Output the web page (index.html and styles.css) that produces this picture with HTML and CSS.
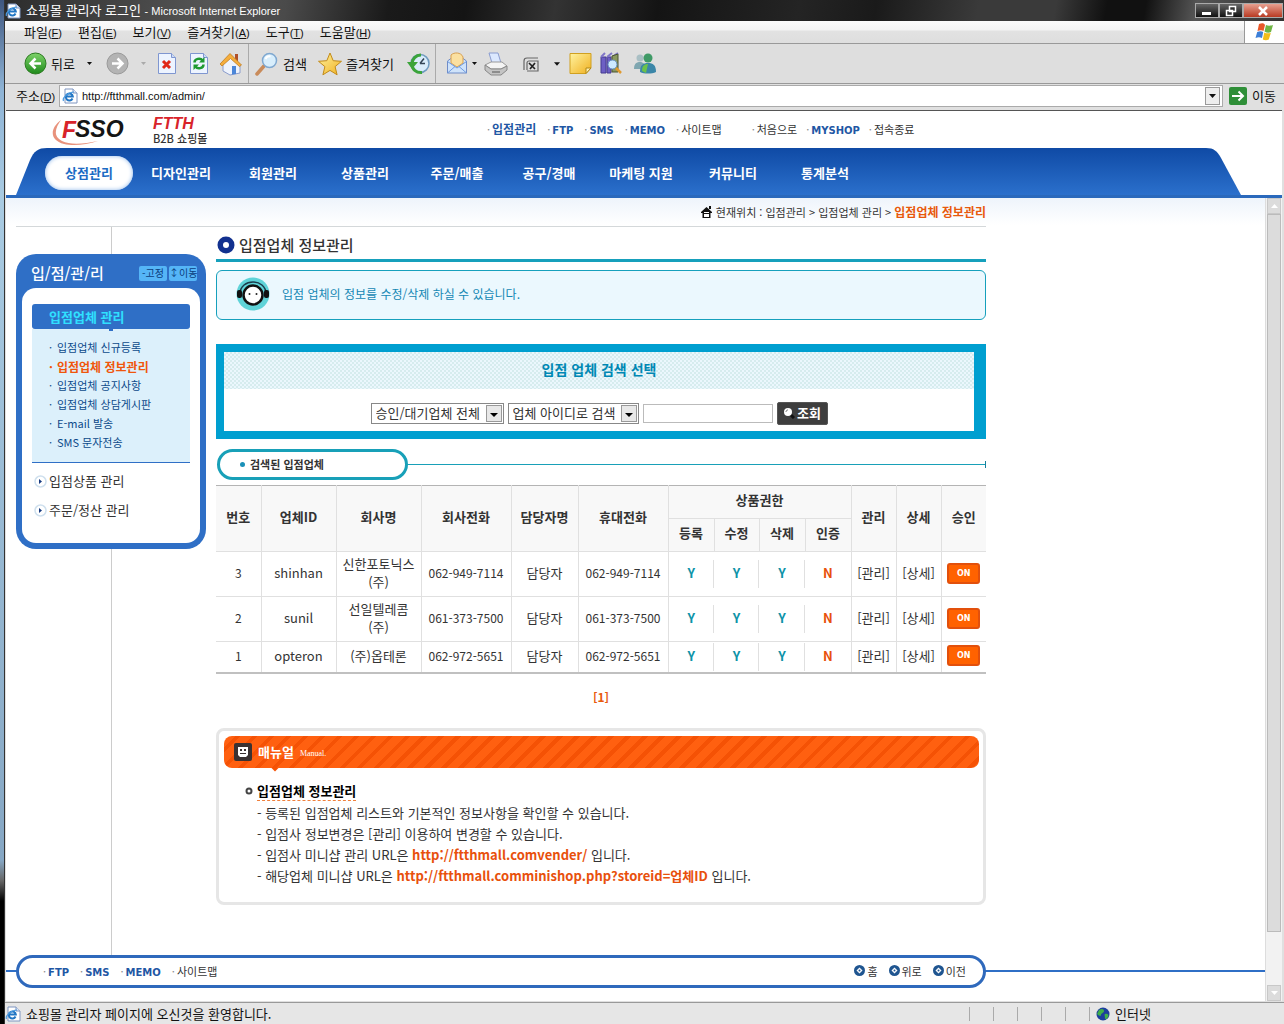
FILE: index.html
```html
<!DOCTYPE html>
<html lang="ko">
<head>
<meta charset="utf-8">
<title>쇼핑몰 관리자 로그인</title>
<link rel="stylesheet" href="styles.css">
</head>
<body>
<svg class="defs" width="0" height="0" aria-hidden="true">
  <defs>
    <linearGradient id="gGreen" x1="0" y1="0" x2="0" y2="1"><stop offset="0" stop-color="#7ed36a"/><stop offset="1" stop-color="#1f8a1c"/></linearGradient>
    <linearGradient id="gGold" x1="0" y1="0" x2="1" y2="1"><stop offset="0" stop-color="#fff3a0"/><stop offset="1" stop-color="#f0b020"/></linearGradient>
    <symbol id="ie" viewBox="0 0 16 16"><path d="M3 1h8l4 4v10H3z" fill="#fff" stroke="#7f95c0"/><path d="M11 1v4h4" fill="#dfe8f6" stroke="#7f95c0"/><path d="M10.500 10.500A3.500 3.500 0 1 1 10.800 8.500H4.500" fill="none" stroke="#2276c4" stroke-width="2"/><path d="M1.500 13C0 10 6 4 12 4" fill="none" stroke="#4c9be0" stroke-width="1.200"/></symbol>
    <symbol id="down" viewBox="0 0 7 4"><path d="M0 0h7L3.500 4z" fill="currentColor"/></symbol>
    <symbol id="ball" viewBox="0 0 11 11"><circle cx="5.500" cy="5.500" r="5.500" fill="#1f5590"/><path d="M5.500 2.500 8.500 5.500 5.500 8.500 2.500 5.500z" fill="#fff"/><circle cx="5.500" cy="5.500" r="1" fill="#1f5590"/></symbol>
    <symbol id="go" viewBox="0 0 13 13"><circle cx="6.500" cy="6.500" r="5.500" fill="#fff" stroke="#cfe0ee" stroke-width="1.500"/><path d="M5 4v5l3-2.500z" fill="#163a80"/></symbol>
  </defs>
</svg>
<div class="desktop">
<div class="window">
  <header class="titlebar">
    <svg width="16" height="16"><use href="#ie"/></svg>
    <h1>쇼핑몰 관리자 로그인 <span class="latin">- Microsoft Internet Explorer</span></h1>
    <div class="winbtns">
      <button aria-label="최소화"><svg width="12" height="12"><path d="M1 7h9v3H1z" fill="#fff"/></svg></button>
      <button aria-label="복원"><svg width="12" height="12"><path d="M4.500 1.500h6v5h-6zM1.500 5.500h6v5h-6z" fill="#333" stroke="#fff" stroke-width="1.500"/></svg></button>
      <button class="close" aria-label="닫기"><svg width="12" height="12"><path d="M2 2l8 8M10 2l-8 8" stroke="#fff" stroke-width="2.500"/></svg></button>
    </div>
  </header>
  <nav class="menubar" aria-label="메뉴">
    <a href="#">파일<span class="latin">(<u>F</u>)</span></a>
    <a href="#">편집<span class="latin">(<u>E</u>)</span></a>
    <a href="#">보기<span class="latin">(<u>V</u>)</span></a>
    <a href="#">즐겨찾기<span class="latin">(<u>A</u>)</span></a>
    <a href="#">도구<span class="latin">(<u>T</u>)</span></a>
    <a href="#">도움말<span class="latin">(<u>H</u>)</span></a>
    <div class="flag"><svg width="22" height="20" viewBox="0 0 22 20"><path d="M5 2c3-1 5-1 6 1L9.500 9C8 8 6 8 3.500 9z" fill="#e8582a"/><path d="M12 3c2 1 4 1 7 0l-2 7c-2 1-4 1-6.500-.500z" fill="#6fb544"/><path d="M3.200 10c2.500-1 4.500-1 6 0L8 16c-2-1-4-1-6.500 0z" fill="#3c7fd8"/><path d="M10.300 10.500c2 1 4 1 6.500.500l-2 6.500c-2 1-4 1-6 0z" fill="#f3bd1a"/></svg></div>
  </nav>
  <div class="toolbar">
    <button><svg width="23" height="23"><circle cx="11.500" cy="11.500" r="10.500" fill="url(#gGreen)" stroke="#2b7a20"/><path d="M17 11.500H7M11.500 6.500 6.500 11.500l5 5" fill="none" stroke="#fff" stroke-width="2.500"/></svg><span>뒤로</span><svg class="gap-l" width="5" height="3"><use href="#down"/></svg></button>
    <button class="off" aria-label="앞으로"><svg width="23" height="23"><circle cx="11.500" cy="11.500" r="10.500" fill="#b4b4b4" stroke="#999"/><path d="M6 11.500h10M11.500 6.500l5 5-5 5" fill="none" stroke="#fff" stroke-width="2.500"/></svg><svg class="gap-l" width="5" height="3"><use href="#down"/></svg></button>
    <button aria-label="중지"><svg width="20" height="23"><path d="M1.500 1.500h13l4 4v16h-17z" fill="#edf4ff" stroke="#7f96d0"/><path d="M14.500 1.500v4h4" fill="#cddcf5" stroke="#7f96d0"/><path d="M6 9l7 7M13 9l-7 7" stroke="#e02818" stroke-width="3"/></svg></button>
    <button aria-label="새로 고침"><svg width="20" height="23"><path d="M1.500 1.500h13l4 4v16h-17z" fill="#edf4ff" stroke="#7f96d0"/><path d="M14.500 1.500v4h4" fill="#cddcf5" stroke="#7f96d0"/><path d="M5.500 10.500c0-4 6-5 8-2M14.500 12.500c0 4-6 5-8 2" fill="none" stroke="#1e9a30" stroke-width="2.500"/><path d="M15.500 5v5.500H10zM4.500 18v-5.500H10z" fill="#1e9a30"/></svg></button>
    <button aria-label="홈"><svg width="24" height="24"><path d="M16 2h3v7h-3z" fill="#b05028"/><path d="M4 11l8-8 9 9v9l-10 2-7-4z" fill="#eef3fc" stroke="#8a9ccc"/><path d="M1 12 11 1.500 22.500 13l-2 1.500-9-8L3 14z" fill="#f5ae3c" stroke="#c27c20" stroke-width=".800"/><path d="M13 14h4v8l-4 .500z" fill="#4b86d8"/></svg></button>
    <i class="sep"></i>
    <button><svg width="24" height="24"><path d="M2 22l7-8" stroke="#c98b5a" stroke-width="3.500" stroke-linecap="round"/><circle cx="14.500" cy="8.500" r="7" fill="#d8eefc" stroke="#7fa8d0" stroke-width="1.500"/><path d="M10.500 7c1-2 3-3 5-2.500" stroke="#fff" stroke-width="2" fill="none"/></svg><span>검색</span></button>
    <button><svg width="24" height="24"><path d="M12 1l3.200 7.700 8.300.6-6.400 5.300 2 8.200L12 18.400l-7.100 4.400 2-8.200L.5 9.300l8.300-.6z" fill="url(#gGold)" stroke="#c28a18"/></svg><span>즐겨찾기</span></button>
    <button aria-label="목록 보기"><svg width="24" height="23"><circle cx="13" cy="11.500" r="9" fill="#d9ecfa" stroke="#6f9bc0" stroke-width="1.500"/><path d="M13 11.500l4-5M13 11.500h5" stroke="#345" stroke-width="1.500"/><path d="M15 20.500C9 21 5 17 5 12c0-5 4-9 9-9" fill="none" stroke="#3ba43a" stroke-width="3"/><path d="M0 10h11l-6 7z" fill="#3ba43a"/></svg></button>
    <i class="sep"></i>
    <button aria-label="메일"><svg width="22" height="23"><path d="M1.500 9 11 2l9.500 7v12h-19z" fill="#cfe3fa" stroke="#6f8cc8"/><path d="M5 3c3-3 10-3 12 2v6l-6 4-6-4z" fill="#fbe0a0" stroke="#d8a050"/><path d="M1.500 9.500 11 16l9.500-6.500M1.500 21 9 14.500M20.500 21 13 14.500" fill="none" stroke="#6f9ce0"/></svg><svg width="5" height="3"><use href="#down"/></svg></button>
    <button aria-label="인쇄"><svg width="24" height="24"><path d="M5 1h9l3 10H8z" fill="#dbe8ff" stroke="#8a9cd0"/><path d="M1 13l6-3h11l5 4-6 3H7z" fill="#f4f4f4" stroke="#999"/><path d="M1 13v5l6 5h10l6-5v-4l-6 3H7z" fill="#c4c4c4" stroke="#888"/><path d="M8 20h8" stroke="#555"/></svg></button>
    <button class="edit" aria-label="편집"><svg width="16" height="16"><path d="M1 14V5c0-2 1-3 3-3h11M4 14V7c0-1 1-2 2-2h9v10H4" fill="none" stroke="#666" stroke-width="1.200"/><path d="M6 7l6 6M12 7l-5 6" stroke="#222" stroke-width="1.700"/></svg><svg class="gap-l" width="6" height="4"><use href="#down"/></svg></button>
    <button aria-label="메모"><svg width="23" height="23"><path d="M1 1.500h21V16l-5 5.500H1z" fill="url(#gGold)" stroke="#d0a020"/><path d="M22 16h-5v5.500z" fill="#fff0b0" stroke="#b08818"/></svg></button>
    <button aria-label="리서치"><svg width="22" height="23"><path d="M1 5h5v16H1zM7 5h4v16H7z" fill="#6d5fc4" stroke="#453a90"/><path d="M1 5l4-4M7 5l5-4M12 5l6-4" stroke="#8076c8" stroke-width="2"/><path d="M12 4l6-2v18h-6z" fill="#8a9860" stroke="#4a5530"/><circle cx="12.500" cy="12.500" r="4.500" fill="#cdeaff" stroke="#668fc0"/><path d="M16 16l5 5" stroke="#e09a30" stroke-width="2.500"/></svg></button>
    <button aria-label="메신저"><svg width="24" height="23"><circle cx="7" cy="6" r="3.500" fill="#a9bfc4"/><path d="M1 17c0-6 3-7 6-7s6 2 6 7z" fill="#7fa6b0"/><circle cx="15" cy="6" r="4.500" fill="#3f9a66"/><path d="M7 20c0-7 3-9 8-9s8 2 8 9c-4 2-12 2-16 0z" fill="#3b86a8"/><path d="M9 19c0-5 2-7 6-7l-2 9z" fill="#6cc24a"/></svg></button>
  </div>
  <form class="address">
    <label for="addr">주소<span class="latin">(<u>D</u>)</span></label>
    <div class="addrbox">
      <svg width="16" height="16"><use href="#ie"/></svg>
      <input id="addr" type="text" value="http://ftthmall.com/admin/">
      <button type="button" class="drop" aria-label="목록"><svg width="7" height="4"><use href="#down"/></svg></button>
    </div>
    <button type="button" class="gobtn"><svg width="18" height="18"><rect width="18" height="18" rx="2" fill="#2f8f38"/><path d="M3 9h11M9.500 4.500 14 9l-4.500 4.500" fill="none" stroke="#fff" stroke-width="2"/></svg>이동</button>
  </form>

  <div class="viewport">
    <header class="site-head">
      <div class="brand">
        <svg class="logo" width="76" height="32" viewBox="0 0 76 32" role="img" aria-label="FSSO"><path d="M9 4C-2 12-3 24 12 28c9 2 22 1 34-3C32 28 18 29 10 25 0 20 4 11 9 4z" fill="#e8927c"/><text x="10" y="22" class="logo-f">F</text><text x="23" y="21" class="logo-s">SSO</text></svg>
        <p class="mall"><b>FTTH</b><span>B2B 쇼핑몰</span></p>
      </div>
      <ul class="toplinks">
        <li><a class="kb" href="#">입점관리</a></li><li><a class="en" href="#">FTP</a></li><li><a class="en" href="#">SMS</a></li><li><a class="en" href="#">MEMO</a></li><li><a href="#">사이트맵</a></li>
      </ul>
      <ul class="toplinks tight">
        <li><a href="#">처음으로</a></li><li><a class="en" href="#">MYSHOP</a></li><li><a href="#">접속종료</a></li>
      </ul>
    </header>
    <nav class="gnb" aria-label="주 메뉴">
      <svg class="cap" width="31" height="47" viewBox="0 0 31 47"><defs><linearGradient id="gNav" x1="0" y1="0" x2="0" y2="1"><stop offset="0" stop-color="#0f4aa5"/><stop offset="1" stop-color="#2b70cc"/></linearGradient></defs><path d="M0 47 14 12C18 3 22 0 31 0v47z" fill="url(#gNav)"/></svg>
      <ul>
        <li><a class="on" href="#">상점관리</a></li><li><a href="#">디자인관리</a></li><li><a href="#">회원관리</a></li><li><a href="#">상품관리</a></li><li><a href="#">주문/매출</a></li><li><a href="#">공구/경매</a></li><li><a href="#">마케팅 지원</a></li><li><a href="#">커뮤니티</a></li><li><a href="#">통계분석</a></li>
      </ul>
      <svg class="cap" width="35" height="47" viewBox="0 0 35 47"><path d="M35 47 15 10C11 3 8 0 0 0v47z" fill="url(#gNav)"/></svg>
    </nav>

    <div class="frame">
      <div class="page">
        <p class="crumb"><svg width="11" height="12"><path d="M0 6 5.500 1 11 6v1H9.500v5h-8V7H0z" fill="#111"/><path d="M3 6h5v1H3zM3 8h5v3H3z" fill="#fff"/><path d="M8 0h2v3H8z" fill="#111"/></svg><span>현재위치 : 입점관리 &gt; 입점업체 관리 &gt; <strong>입점업체 정보관리</strong></span></p>
        <div class="cols">
          <aside class="side">
            <div class="lnb">
              <div class="lnb-head"><h2>입/점/관/리</h2><button>-고정</button><button>↕이동</button></div>
              <div class="lnb-body">
                <h3>입점업체 관리</h3>
                <ul class="sub">
                  <li><a href="#">입점업체 신규등록</a></li>
                  <li class="cur"><a href="#">입점업체 정보관리</a></li>
                  <li><a href="#">입점업체 공지사항</a></li>
                  <li><a href="#">입점업체 상담게시판</a></li>
                  <li><a href="#">E-mail 발송</a></li>
                  <li><a href="#">SMS 문자전송</a></li>
                </ul>
                <a class="more" href="#"><svg width="13" height="13"><use href="#go"/></svg>입점상품 관리</a>
                <a class="more" href="#"><svg width="13" height="13"><use href="#go"/></svg>주문/정산 관리</a>
              </div>
            </div>
          </aside>
          <main class="main">
            <h2 class="title"><svg width="18" height="18"><circle cx="9" cy="9" r="8.500" fill="#12318f"/><circle cx="9" cy="9" r="3" fill="#fff"/></svg>입점업체 정보관리</h2>
            <div class="notice"><svg width="34" height="34"><circle cx="17" cy="17" r="16.500" fill="#5fd3d8"/><path d="M4 17C4 1 30 1 30 17" fill="none" stroke="#1b3c4c" stroke-width="1.500"/><circle cx="17" cy="18" r="9.500" fill="#fff" stroke="#111" stroke-width="2.500"/><rect x="1" y="13" width="5" height="8" rx="2" fill="#111"/><rect x="28" y="13" width="5" height="8" rx="2" fill="#111"/><circle cx="13.500" cy="17" r="1" fill="#222"/><circle cx="20.500" cy="17" r="1" fill="#222"/></svg><p>입점 업체의 정보를 수정/삭제 하실 수 있습니다.</p></div>

            <form class="search">
              <h3>입점 업체 검색 선택</h3>
              <div class="fields">
                <select class="w1" aria-label="승인 상태"><option>승인/대기업체 전체</option></select>
                <select class="w2" aria-label="검색 기준"><option>업체 아이디로 검색</option></select>
                <input type="text" aria-label="검색어">
                <button type="button"><svg width="12" height="12"><path d="M6 6l5 5" stroke="#111" stroke-width="3"/><circle cx="5" cy="5" r="4" fill="#fff"/><path d="M3 5c0-1.500 1-2 2-2" stroke="#777" fill="none"/></svg>조회</button>
              </div>
            </form>

            <div class="result-head"><h3>검색된 입점업체</h3><i></i></div>
            <table class="list">
              <colgroup><col class="c45"><col class="c75"><col class="c85"><col class="c90"><col class="c67"><col class="c90"><col class="c46"><col class="c45"><col class="c46"><col class="c46"><col class="c45"><col class="c45"><col></colgroup>
              <thead>
                <tr><th rowspan="2">번호</th><th rowspan="2">업체ID</th><th rowspan="2">회사명</th><th rowspan="2">회사전화</th><th rowspan="2">담당자명</th><th rowspan="2">휴대전화</th><th colspan="4">상품권한</th><th rowspan="2">관리</th><th rowspan="2">상세</th><th rowspan="2">승인</th></tr>
                <tr><th>등록</th><th>수정</th><th>삭제</th><th>인증</th></tr>
              </thead>
              <tbody>
                <tr class="tall"><td class="num">3</td><td>shinhan</td><td>신한포토닉스<br>(주)</td><td class="num">062-949-7114</td><td>담당자</td><td class="num">062-949-7114</td><td class="y">Y</td><td class="y">Y</td><td class="y">Y</td><td class="n">N</td><td><a href="#">[관리]</a></td><td><a href="#">[상세]</a></td><td><button>ON</button></td></tr>
                <tr class="tall"><td class="num">2</td><td>sunil</td><td>선일텔레콤<br>(주)</td><td class="num">061-373-7500</td><td>담당자</td><td class="num">061-373-7500</td><td class="y">Y</td><td class="y">Y</td><td class="y">Y</td><td class="n">N</td><td><a href="#">[관리]</a></td><td><a href="#">[상세]</a></td><td><button>ON</button></td></tr>
                <tr><td class="num">1</td><td>opteron</td><td>(주)옵테론</td><td class="num">062-972-5651</td><td>담당자</td><td class="num">062-972-5651</td><td class="y">Y</td><td class="y">Y</td><td class="y">Y</td><td class="n">N</td><td><a href="#">[관리]</a></td><td><a href="#">[상세]</a></td><td><button>ON</button></td></tr>
              </tbody>
            </table>
            <p class="paging"><a href="#">[1]</a></p>

            <section class="manual">
              <h3><svg width="18" height="18"><rect width="18" height="18" rx="2" fill="#3a3232"/><path d="M4 4h10v8l-2 2H6l-2-2z" fill="#fff"/><path d="M6 6h2v2H6zM10 6h2v2h-2zM6 10h6v1H6z" fill="#3a3232"/></svg>매뉴얼 <small>Manual.</small></h3>
              <dl>
                <dt><svg width="8" height="8"><circle cx="4" cy="4" r="2.500" fill="none" stroke="#444" stroke-width="2"/></svg><span>입점업체 정보관리</span></dt>
                <dd>- 등록된 입점업체 리스트와 기본적인 정보사항을 확인할 수 있습니다.</dd>
                <dd>- 입점사 정보변경은 [관리] 이용하여 변경할 수 있습니다.</dd>
                <dd>- 입점사 미니샵 관리 URL은 <b>http://ftthmall.comvender/</b> 입니다.</dd>
                <dd>- 해당업체 미니샵 URL은 <b>http://ftthmall.comminishop.php?storeid=업체ID</b> 입니다.</dd>
              </dl>
            </section>
          </main>
        </div>
        <footer class="foot">
          <div class="footbar">
            <ul class="toplinks">
              <li><a class="en" href="#">FTP</a></li><li><a class="en" href="#">SMS</a></li><li><a class="en" href="#">MEMO</a></li><li><a href="#">사이트맵</a></li>
            </ul>
            <div class="jump"><a href="#"><svg width="11" height="11"><use href="#ball"/></svg>홈</a><a href="#"><svg width="11" height="11"><use href="#ball"/></svg>위로</a><a href="#"><svg width="11" height="11"><use href="#ball"/></svg>이전</a></div>
          </div>
        </footer>
      </div>
      <div class="scroll" aria-hidden="true"><span class="arr"><svg width="7" height="4" viewBox="0 0 7 4"><path d="M0 4h7L3.500 0z" fill="#fff"/></svg></span><span class="thumb"></span><span class="track"></span><span class="arr"><svg width="7" height="4" viewBox="0 0 7 4"><path d="M0 0h7L3.500 4z" fill="#fff"/></svg></span></div>
    </div>
  </div>
  <div class="status">
    <svg width="16" height="16"><use href="#ie"/></svg>
    <p>쇼핑몰 관리자 페이지에 오신것을 환영합니다.</p>
    <i></i><i></i><i></i><i></i><i></i><i></i>
    <div class="zone"><svg width="14" height="14"><circle cx="7" cy="7" r="6.500" fill="#1c3f9c"/><path d="M3 3c3-2 5-1 5 1S5 6 5 8 2 8 1 7zM9 7c3-1 4 1 3 3s-3 3-3 1-1-3 0-4z" fill="#3fb04a"/></svg>인터넷</div>
  </div>
</div>
</div>
</body>
</html>
```
FILE: styles.css
```css
* { box-sizing: border-box; }
body, h1, h2, h3, p, ul, dl, dd { margin: 0; padding: 0; }
ul { list-style: none; }
body {
  font: 13px/18px "Noto Sans CJK KR", "Noto Sans", sans-serif;
  color: #333;
  background: #fff;
}
a { color: inherit; text-decoration: none; }
button, input, select { font: inherit; color: inherit; margin: 0; padding: 0; border: 0; background: none; }
h1, h2, h3 { font-size: 13px; font-weight: 400; }
i { font-style: normal; }
svg { flex: none; display: block; }
.defs { position: absolute; }
.latin { font-family: "Liberation Sans", sans-serif; font-size: 11px; }

.desktop {
  display: flex;
  min-height: 100vh;
  padding-left: 4px;
  background: linear-gradient(#3e567f 0, #8fb4d6 90px, #a9cbe2 200px, #86a7c4 84%, #666 86%, #000 88%);
}
.window {
  flex: 1;
  min-width: 0;
  display: flex;
  flex-direction: column;
  background: #e0e0e0;
  border-left: 1px solid #333;
  color: #111;
}

/* Browser chrome */
.titlebar {
  display: flex;
  align-items: center;
  gap: 5px;
  height: 21px;
  color: #fff;
  background: linear-gradient(100deg, #2c2c2c 0, #3a3a3a 5%, #555 16%, #4a4a4a 22%, #1a1a1a 30%, #141414 36%, #333 43%, #141414 51%, #242424 62%, #1a1a1a 68%, #3a3a3a 76%, #3a3a3a 82%, #111 86%, #111 89%, #555 93%, #333 100%);
}
.titlebar h1 { flex: 1; }
.winbtns { display: flex; padding-right: 1px; align-self: flex-end; }
.winbtns button {
  display: flex;
  align-items: center;
  justify-content: center;
  width: 24px;
  height: 15px;
  margin-bottom: 3px;
  border: 1px solid #aaa;
  background: linear-gradient(#666, #111);
}
.winbtns .close { width: 40px; background: linear-gradient(#e8a090, #b83a22); }
.menubar {
  display: flex;
  align-items: center;
  gap: 16px;
  height: 23px;
  padding-left: 19px;
  background: linear-gradient(#fbfbfb 0, #f4f4f4 9px, #e2e2e2 10px, #dedede);
  border-bottom: 1px solid #999;
}
.flag {
  align-self: stretch;
  display: flex;
  align-items: center;
  justify-content: center;
  width: 40px;
  margin-left: auto;
  background: #fff;
  border-left: 1px solid #999;
}
.toolbar {
  display: grid;
  grid-template-columns: 82px 51px 32px 30px 29px 7px 63px 89px 28px 11px 38px 39px 46px 31px 33px 30px;
  align-items: center;
  height: 40px;
  padding-left: 19px;
  background: #dedede;
  border-bottom: 1px solid #999;
}
.toolbar button { display: flex; align-items: center; gap: 4px; white-space: nowrap; }
.toolbar .gap-l { margin-left: 8px; }
.toolbar .off { color: #aaa; }
.toolbar .edit .gap-l { margin-left: 11px; }
.sep { width: 1px; height: 39px; background: #aaa; }
.address { display: flex; align-items: center; height: 24px; padding-left: 11px; }
.address label { width: 43px; }
.addrbox {
  flex: 1;
  display: flex;
  align-items: center;
  gap: 4px;
  height: 22px;
  padding: 0 2px;
  background: #fff;
  border: 1px solid #aaa;
}
.addrbox input { flex: 1; min-width: 0; font: 11px/18px "Liberation Sans", sans-serif; outline: 0; }
.drop {
  display: flex;
  align-items: center;
  justify-content: center;
  width: 15px;
  height: 18px;
  margin-right: 6px;
  border: 1px solid #999;
  background: #eee;
}
.addrbox .drop { margin-right: 0; }
.gobtn { display: flex; align-items: center; gap: 5px; padding: 0 8px 0 6px; }
.status {
  display: flex;
  align-items: center;
  height: 22px;
  background: #e6e6e6;
  border-top: 1px solid #999;
}
.status p { flex: 1; padding-left: 5px; }
.status i { width: 24px; height: 14px; border-left: 1px solid #aaa; }
.zone { display: flex; gap: 5px; align-items: center; width: 194px; padding-left: 6px; margin-left: -23px; }

/* Site header */
.viewport {
  flex: 1;
  display: flex;
  flex-direction: column;
  margin: 2px 2px 1px 1px;
  border-top: 1px solid #555;
  background: #fff;
  color: #333;
}
.site-head { display: flex; height: 37px; }
.brand { display: flex; gap: 25px; width: 481px; padding-left: 46px; }
.logo { margin-top: 5px; }
.logo-f { font: italic bold 23px "Liberation Sans", sans-serif; fill: #d8232a; }
.logo-s { font: italic bold 23px "Liberation Sans", sans-serif; fill: #151515; }
.mall { padding-top: 4px; }
.mall b { display: block; font: italic bold 16px/18px "Liberation Sans", sans-serif; color: #d8232a; }
.mall span { display: block; font-size: 11px; line-height: 10px; font-weight: 500; }
.toplinks { display: flex; align-items: center; gap: 11px; font-size: 11px; height: 35px; }
.toplinks li::before { content: "·"; color: #888; margin-right: 2px; }
.toplinks .kb { font-size: 12px; font-weight: 700; color: #1f57a4; }
.toplinks .en { font: bold 10px "DejaVu Sans", sans-serif; color: #1f57a4; }
.toplinks.tight { gap: 9px; margin-left: 30px; }
.gnb {
  display: flex;
  height: 50px;
  padding: 0 41px 0 10px;
  background: #fff;
  border-bottom: 3px solid #2a69bc;
}
.gnb ul {
  flex: 1;
  display: grid;
  grid-template-columns: repeat(9, 92px);
  align-items: center;
  background: linear-gradient(#0f4aa5, #2b70cc);
}
.gnb li { margin-left: -4px; margin-right: 4px; }
.gnb a { display: block; padding-top: 2px; line-height: 34px; text-align: center; color: #fff; font-size: 13px; font-weight: 700; white-space: nowrap; }
.gnb .on { margin: 3px 2px 0; padding: 0; background: #fff; border-radius: 17px; color: #1c6bc4; box-shadow: inset 0 0 4px #8fb8ea; }

/* Scrolled frame */
.frame { flex: 1; display: flex; }
.page { flex: 1; min-width: 0; display: flex; flex-direction: column; background: linear-gradient(#eef4fb, #fff 27px); }
.crumb {
  display: flex;
  align-items: center;
  justify-content: flex-end;
  gap: 4px;
  width: 970px;
  height: 29px;
  margin-left: 10px;
  font-size: 11px;
  border-bottom: 1px solid #d4d8da;
}
.crumb strong { font-size: 12px; color: #e8590c; }
.cols { flex: 1; display: flex; gap: 10px; width: 970px; margin-left: 10px; }
.side {
  width: 190px;
  padding-top: 27px;
  background: linear-gradient(#ccc, #ccc) 95px 0 / 1px 100% no-repeat;
}
.lnb { padding: 0 6px 6px; background: #2f6fc6; border-radius: 20px; }
.lnb-head { display: flex; align-items: center; gap: 2px; height: 34px; padding: 4px 3px 0 9px; }
.lnb-head h2 { flex: 1; font-size: 15px; font-weight: 500; color: #fff; white-space: nowrap; }
.lnb-head button { width: 28px; height: 15px; font-size: 10px; line-height: 14px; background: #55b5f7; color: #0b3d80; border-radius: 2px; white-space: nowrap; }
.lnb-body { height: 255px; padding: 16px 10px 0; background: #fff; border-radius: 14px; }
.lnb-body h3 { height: 25px; padding-left: 17px; line-height: 25px; font-weight: 700; color: #2fe0ff; background: #2f6fc6; border-radius: 3px; }
.sub { padding: 9px 0 10px 17px; margin-bottom: 8px; font-size: 11px; line-height: 19px; color: #0c4a8a; background: linear-gradient(#2f6fc6, #2f6fc6) center top / 4px 2px no-repeat #dcf0fb; border-bottom: 1px solid #2f6fc6; }
.sub li::before { content: "·"; display: inline-block; width: 8px; }
.sub .cur { font-size: 12px; font-weight: 700; color: #f0560c; }
.more { display: flex; align-items: center; gap: 2px; height: 20px; padding-left: 2px; margin-bottom: 9px; }

/* Content */
.main { flex: 1; min-width: 0; padding-bottom: 50px; }
.title {
  display: flex;
  align-items: center;
  gap: 4px;
  height: 35px;
  padding: 3px 0 0 1px;
  font-size: 15px;
  font-weight: 500;
  color: #333;
  border-bottom: 3px solid #16a0bc;
}
.notice {
  display: flex;
  align-items: center;
  gap: 12px;
  height: 50px;
  margin-top: 8px;
  padding: 0 0 2px 19px;
  font-size: 12px;
  color: #1487b4;
  background: #ebf8fe;
  border: 1px solid #16a0bc;
  border-radius: 6px;
}
.search { margin-top: 24px; border: 8px solid #009fd0; border-right-width: 12px; background: #fff; }
.search h3 {
  height: 37px;
  line-height: 34px;
  text-align: center;
  font-size: 14px;
  font-weight: 700;
  color: #0088b4;
  background: repeating-conic-gradient(#d6ecee 0 25%, #ebf7fd 0 50%) 0 0 / 4px 4px;
}
.fields { display: flex; align-items: center; justify-content: center; gap: 4px; height: 42px; padding-top: 6px; }
.fields select {
  appearance: none;
  height: 21px;
  padding: 0 20px 0 4px;
  line-height: 18px;
  border: 1px solid #888;
  background: #fff url("data:image/svg+xml,%3Csvg xmlns='http://www.w3.org/2000/svg' width='16' height='17'%3E%3Crect x='.5' y='.5' width='15' height='16' fill='%23e8e8e8' stroke='%23999'/%3E%3Cpath d='M4 8h8l-4 4z' fill='%23000'/%3E%3C/svg%3E") right 1px center no-repeat;
}
.fields .w1 { width: 133px; }
.fields .w2 { width: 131px; }
.fields input { width: 130px; height: 19px; border: 1px solid #bbb; }
.fields button {
  display: flex;
  align-items: center;
  justify-content: center;
  gap: 2px;
  width: 51px;
  height: 23px;
  font-weight: 700;
  color: #fff;
  background: #3e3e3e;
  border: 1px solid #555;
  border-radius: 2px;
}
.result-head { display: flex; align-items: center; margin: 10px 0 5px 1px; }
.result-head h3 {
  width: 191px;
  height: 31px;
  padding-left: 20px;
  line-height: 24px;
  font-size: 11px;
  font-weight: 700;
  border: 3px solid #18a0b8;
  border-radius: 16px;
}
.result-head h3::before { content: ""; display: inline-block; width: 5px; height: 5px; margin-right: 5px; border-radius: 3px; background: #1a90b8; vertical-align: 2px; }
.result-head i { flex: 1; height: 7px; border-right: 1px solid #18809c; background: linear-gradient(#18a0b8, #18a0b8) 0 3px / 100% 1px no-repeat; }

.list { width: 100%; table-layout: fixed; border-collapse: collapse; border-top: 1px solid #b4b4b4; border-bottom: 2px solid #c0c0c0; }
.c45 { width: 45px; }
.c46 { width: 46px; }
.c67 { width: 67px; }
.c75 { width: 75px; }
.c85 { width: 85px; }
.c90 { width: 90px; }
.list th, .list td { padding: 0 0 2px; text-align: center; white-space: nowrap; border: 1px solid #e0e0e0; }
.list tr > :first-child { border-left: 0; }
.list th { height: 33px; padding-bottom: 4px; font-weight: 700; background: #f8f8f8; border-top-color: #ececec; }
.list thead tr:first-child th { border-top: 1px solid #b4b4b4; }
.list thead tr + tr > th:first-child { border-left: 1px solid #e0e0e0; }
.list tr > :last-child { border-right: 0; }
.list thead tr + tr > th:last-child { border-right: 1px solid #e0e0e0; }
.list td { height: 31px; }
.list tbody tr:last-child td { border-bottom: 2px solid #c0c0c0; }
.list .tall td { height: 45px; }
.list .num { font-size: 12px; }
.list .y, .list .n { font-weight: 700; border-left: 0; border-right: 0; background: linear-gradient(#e0e0e0, #e0e0e0) right center / 1px 28px no-repeat; }
.list .num + .y { border-left: 1px solid #e0e0e0; }
.list .y { color: #0d93a8; }
.list .n { color: #e8500c; background: none; border-right: 1px solid #e0e0e0; }
.list button {
  width: 33px;
  height: 21px;
  font: bold 8px/17px "DejaVu Sans", sans-serif;
  color: #fff;
  background: #ff6200;
  border: 2px solid #e2500c;
  border-radius: 3px;
  vertical-align: middle;
}
.paging { padding: 14px 0; margin-bottom: 8px; text-align: center; font-size: 12px; font-weight: 700; color: #e8590c; }

.manual { height: 177px; padding: 5px 4px 0 5px; border: 3px solid #e6e6e6; border-radius: 8px; }
.manual h3 {
  display: flex;
  align-items: center;
  gap: 6px;
  height: 32px;
  padding-left: 10px;
  font-weight: 700;
  color: #fff;
  border-radius: 8px;
  background: repeating-linear-gradient(135deg, #ff6010 0 8px, #f55205 8px 12px);
}
.manual small { padding-top: 4px; font: 8px "Liberation Serif", serif; }
.manual h3 + dl::before {
  content: "";
  display: block;
  width: 8px;
  height: 4px;
  margin-left: 26px;
  background: #f55205;
  clip-path: polygon(0 0, 100% 0, 50% 100%);
}
.manual dl { padding: 0 0 0 21px; line-height: 21px; }
.manual dt { display: flex; align-items: center; gap: 4px; height: 21px; margin-top: 9px; font-weight: 700; color: #000; }
.manual dt span { line-height: 18px; border-bottom: 1px dashed #f0803c; }
.manual dd { padding-left: 12px; }
.manual b { color: #e8500c; }

.foot { padding: 0 0 13px 10px; background: linear-gradient(#2f6fc6, #2f6fc6) 0 15px / 100% 2px no-repeat; }
.footbar {
  display: flex;
  align-items: center;
  justify-content: space-between;
  width: 970px;
  height: 33px;
  padding: 0 17px 2px 24px;
  background: #fff;
  border: 3px solid #2f69bc;
  border-radius: 17px;
}
.footbar .toplinks { height: auto; }
.jump { display: flex; gap: 11px; font-size: 11px; }
.jump a { display: flex; align-items: center; gap: 2px; }

.scroll { display: flex; flex-direction: column; width: 17px; padding: 0 1px; background: #f2f2f2; border-left: 1px solid #ddd; }
.arr { display: flex; align-items: center; justify-content: center; height: 16px; background: #dcdcdc; border: 1px solid #c8c8c8; }
.thumb { flex: 716; background: #dcdcdc; border: 1px solid #bbb; }
.track { flex: 53; }
```
